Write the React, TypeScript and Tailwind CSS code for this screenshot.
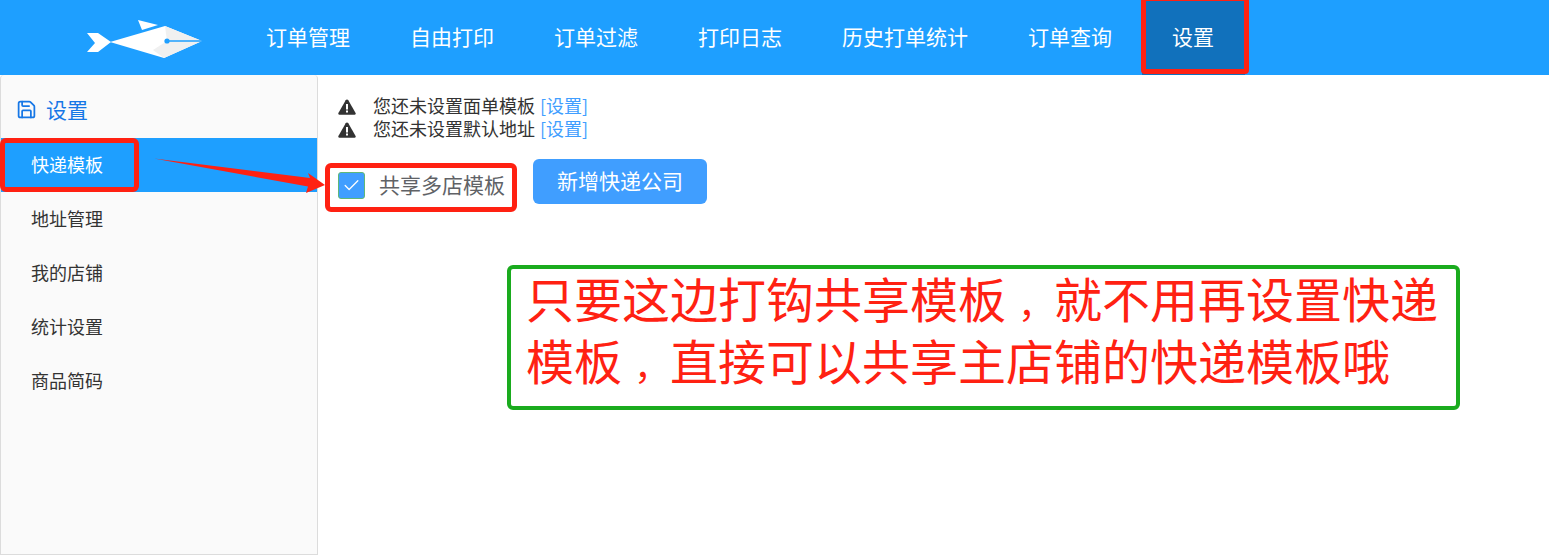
import { Check, Save } from "lucide-react";

const navItems = ["订单管理", "自由打印", "订单过滤", "打印日志", "历史打单统计", "订单查询"];
const sideItems = ["快递模板", "地址管理", "我的店铺", "统计设置", "商品简码"];
const warnings = ["您还未设置面单模板", "您还未设置默认地址"];

function Logo() {
  return (
    <svg width="116" height="40" viewBox="0 0 116 40" className="block">
      <path d="M51 1 L71 6 L55 11 Z" fill="#fff" />
      <path d="M0 14 L11 14 L24 23 L11 33 L0 33 L8 24 Z" fill="#fff" />
      <path d="M23 23 L78 7 L115 22 L77 39 Z" fill="#fff" />
      <path d="M78 7 L115 22 L77 39 L66 31 L80 22 Z" fill="#f0f0f0" />
      <path d="M80 22 H115" stroke="#1e9fff" strokeWidth="1.6" />
      <circle cx="80" cy="22" r="2.6" fill="#1e9fff" />
    </svg>
  );
}

function WarnIcon() {
  return (
    <svg width="18" height="16" viewBox="0 0 18 16" className="mr-[17px] shrink-0">
      <path d="M9 0.5 C9.6 0.5 10 0.8 10.3 1.3 L17.6 14 C18 14.8 17.5 15.7 16.6 15.7 H1.4 C0.5 15.7 0 14.8 0.4 14 L7.7 1.3 C8 0.8 8.4 0.5 9 0.5 Z" fill="#333" />
      <rect x="8" y="5" width="2" height="5.5" fill="#fff" />
      <rect x="8" y="11.5" width="2" height="2" fill="#fff" />
    </svg>
  );
}

// the comma sits mid-cell in the reference, so it gets its own 48px cell
function Comma() {
  return <span className="inline-block w-[48px] pl-[12px] text-[36px] leading-[36px]">，</span>;
}

export default function App() {
  return (
    <div className="relative h-[555px] w-[1549px] overflow-hidden bg-white font-['Noto_Sans_CJK_SC',sans-serif]">
      <header className="flex h-[75px] bg-[#1e9fff] text-[21px] text-white">
        <div className="flex w-[236px] items-start pl-[87px] pt-[19px]">
          <Logo />
        </div>
        {navItems.map((item) => (
          <a key={item} className="flex items-center px-[30px] pb-[2px]">
            {item}
          </a>
        ))}
        <a className="flex items-center bg-[#1171bc] pb-[2px] pl-[30px] pr-[31px]">设置</a>
      </header>

      <div className="flex h-[480px]">
        <aside className="w-[318px] rounded-t border border-t-0 border-[#dcdcdc] bg-[#fafafa] text-[18px] text-[#333]">
          <div className="flex h-[63px] items-center gap-[9px] pl-[15px] pt-[6px] text-[21px] text-[#1677e6]">
            <Save size={21} strokeWidth={2} />
            <span>设置</span>
          </div>
          {sideItems.map((item, i) => (
            <div
              key={item}
              className={`flex h-[54px] items-center pb-[2px] pl-[30px] ${i === 0 ? "bg-[#1e9fff] text-white" : ""}`}
            >
              {item}
            </div>
          ))}
        </aside>

        <main className="flex-1 pl-[20px] pt-[20px]">
          {warnings.map((text) => (
            <div key={text} className="flex h-[23px] items-center text-[18px] text-[#333]">
              <WarnIcon />
              <span className="-translate-y-[1px]">{text}</span>
              <span className="ml-[5px] -translate-y-[1px] text-[#409eff]">[设置]</span>
            </div>
          ))}
          <div className="mt-[18px] flex items-start">
            <div className="mt-[12px] flex items-center">
              <span className="flex h-[27px] w-[27px] items-center justify-center rounded-[3px] border border-[#5fb878] bg-[#409eff]">
                <Check size={19} color="#fff" strokeWidth={1.6} />
              </span>
              <span className="ml-[14px] pb-[2px] text-[21px] leading-[27px] text-[#606266]">共享多店模板</span>
            </div>
            <button className="ml-[28px] flex h-[45px] w-[174px] items-center justify-center rounded-[6px] bg-[#409eff] pb-[2px] text-[21px] text-white">
              新增快递公司
            </button>
          </div>
        </main>
      </div>

      {/* annotations drawn on top of the screenshot */}
      <div className="absolute left-[1141px] top-[-4px] h-[78px] w-[108px] rounded border-[5px] border-[#ff2112]" />
      <div className="absolute left-0 top-[138px] h-[54px] w-[139px] rounded-md border-[5px] border-[#ff2112]" />
      <div className="absolute left-[325px] top-[163px] h-[49px] w-[192px] rounded-md border-[5px] border-[#ff2112]" />
      <svg className="absolute left-[150px] top-[150px]" width="180" height="50" viewBox="0 0 180 50">
        <path d="M4 8.5 L160 28 L158 23 L175 35 L156 43 L158 36.5 Z" fill="#ff2112" />
      </svg>
      <div className="absolute left-[507px] top-[265px] h-[145px] w-[953px] rounded-md border-[4px] border-[#1aab1e] pl-[15px] text-[48px] leading-[62px] text-[#ff2112]">
        <div className="-mt-[3px]">
          只要这边打钩共享模板<Comma />就不用再设置快递
          <br />
          模板<Comma />直接可以共享主店铺的快递模板哦
        </div>
      </div>
    </div>
  );
}
